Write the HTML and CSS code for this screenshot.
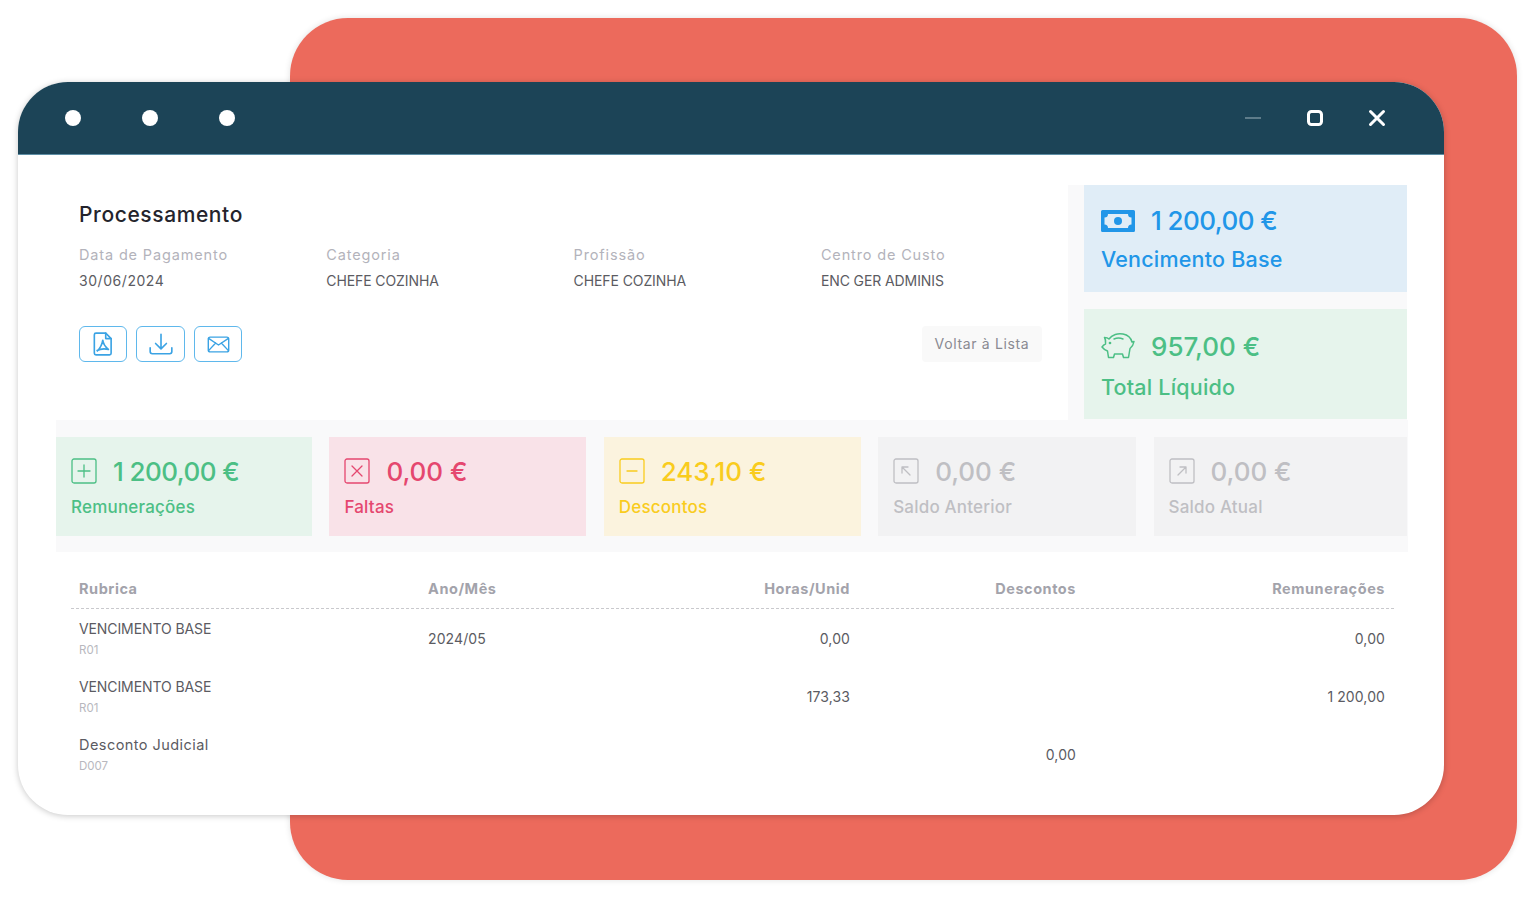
FILE: index.html
```html
<!DOCTYPE html>
<html lang="pt">
<head>
<meta charset="utf-8">
<title>Processamento</title>
<link rel="stylesheet" href="styles.css">
</head>
<body>
<div class="backdrop"></div>
<section class="window">
  <header class="titlebar">
    <div class="dots"><span class="dot"></span><span class="dot"></span><span class="dot"></span></div>
    <div class="controls">
      <svg class="ctl" viewBox="0 0 20 20"><path d="M2 10h16" stroke="#9fb4bd" stroke-width="1.2" fill="none"/></svg>
      <svg class="ctl" viewBox="0 0 20 20"><rect x="3.500" y="3.500" width="13" height="13" rx="3" stroke="#fff" stroke-width="3" fill="none"/></svg>
      <svg class="ctl" viewBox="0 0 20 20"><path d="M3.500 3.500l13 13M16.500 3.500l-13 13" stroke="#fff" stroke-width="3" stroke-linecap="round" fill="none"/></svg>
    </div>
  </header>
  <div class="content">
    <div class="top">
      <div class="main">
        <h1 class="title">Processamento</h1>
        <div class="fields">
          <div><div class="flabel">Data de Pagamento</div><div class="fvalue">30/06/2024</div></div>
          <div><div class="flabel">Categoria</div><div class="fvalue caps">CHEFE COZINHA</div></div>
          <div><div class="flabel">Profissão</div><div class="fvalue caps">CHEFE COZINHA</div></div>
          <div><div class="flabel">Centro de Custo</div><div class="fvalue caps">ENC GER ADMINIS</div></div>
        </div>
        <div class="actions">
          <div class="btns">
            <div class="btn"><svg viewBox="0 0 20 24" class="bicon bicon-pdf"><path d="M3.500 2h9l5 5v13.500a1.500 1.500 0 0 1-1.500 1.500H3.500A1.500 1.500 0 0 1 2 20.500v-17A1.500 1.500 0 0 1 3.500 2z"/><path d="M12.500 2v5h5"/><path d="M9.800 8.500c-.6 3.500-2 7-5 10M9.800 8.500c.4 3.500 2 6 5.200 8.500M4.500 18c3-1.500 6.500-2 10.500-1"/></svg></div>
            <div class="btn btn-wide"><svg viewBox="0 0 24 24" class="bicon bicon-down"><path d="M12 3v13M7 11.500l5 5 5-5"/><path d="M2 15.500v3.500a2 2 0 0 0 2 2h16a2 2 0 0 0 2-2v-3.500"/></svg></div>
            <div class="btn"><svg viewBox="0 0 24 18" class="bicon bicon-mail"><rect x="1.200" y="1.200" width="21.600" height="15.600" rx="2"/><path d="M1.500 2.500L12 9.500l10.500-7M1.500 15.500l7.500-8M22.500 15.500l-7.500-8"/></svg></div>
          </div>
          <div class="back">Voltar à Lista</div>
        </div>
      </div>
      <aside class="side">
        <div class="bigcard blue">
          <div class="amount"><svg class="ic-money" viewBox="0 0 34 22"><path fill="currentColor" fill-rule="evenodd" d="M1.500 0h31A1.500 1.500 0 0 1 34 1.500v19a1.500 1.500 0 0 1-1.500 1.500h-31A1.500 1.500 0 0 1 0 20.500v-19A1.500 1.500 0 0 1 1.500 0zM7 4a3.500 3.500 0 0 1-3.500 3.500v7A3.500 3.500 0 0 1 7 18h20a3.500 3.500 0 0 1 3.500-3.500v-7A3.500 3.500 0 0 1 27 4z"/><circle cx="17" cy="11" r="4" fill="currentColor"/></svg><span class="num tight">1 200,00 €</span></div>
          <div class="biglabel">Vencimento Base</div>
        </div>
        <div class="bigcard green tall">
          <div class="amount"><svg class="ic-pig" viewBox="0 0 34 28" fill="none" stroke="currentColor" stroke-width="1.500" stroke-linejoin="round" stroke-linecap="round"><path d="M8 7C11 2.500 17 1 22 2c5 1 8 4 9 8l2-.5c-.5 3-1.500 5-4 7l-1.500 9h-5l-1-3.500h-8l-1 3.500H7.500L6.500 19C4 18 2.500 17 1 15c1-1.500 2-2.500 3.500-3C4.500 10 5 8 3.500 5.500c2 0 3.500.5 4.500 1.500z"/><path d="M13 7c3-1.200 6-1.200 9 0"/><circle cx="9" cy="11" r=".6"/></svg><span class="num strong">957,00 €</span></div>
          <div class="biglabel">Total Líquido</div>
        </div>
      </aside>
    </div>
    <div class="strip">
      <div class="card c-green">
        <div class="amount small"><svg class="sq" viewBox="0 0 26 26"><rect x="1" y="1" width="24" height="24" rx="2"/><path d="M13 7v12M7 13h12"/></svg><span class="num tight">1 200,00 €</span></div>
        <div class="clabel">Remunerações</div>
      </div>
      <div class="card c-red">
        <div class="amount small"><svg class="sq" viewBox="0 0 26 26"><rect x="1" y="1" width="24" height="24" rx="2"/><path d="M8 8l10 10M18 8L8 18"/></svg><span class="num">0,00 €</span></div>
        <div class="clabel">Faltas</div>
      </div>
      <div class="card c-yellow">
        <div class="amount small"><svg class="sq" viewBox="0 0 26 26"><rect x="1" y="1" width="24" height="24" rx="2"/><path d="M8 13h10"/></svg><span class="num">243,10 €</span></div>
        <div class="clabel">Descontos</div>
      </div>
      <div class="card c-grey">
        <div class="amount small"><svg class="sq" viewBox="0 0 26 26"><rect x="1" y="1" width="24" height="24" rx="2"/><path d="M17 17L9 9M9 15V9h6"/></svg><span class="num">0,00 €</span></div>
        <div class="clabel">Saldo Anterior</div>
      </div>
      <div class="card c-grey">
        <div class="amount small"><svg class="sq" viewBox="0 0 26 26"><rect x="1" y="1" width="24" height="24" rx="2"/><path d="M9 17l8-8M11 9h6v6"/></svg><span class="num">0,00 €</span></div>
        <div class="clabel">Saldo Atual</div>
      </div>
    </div>
    <div class="table">
      <div class="row head">
        <div>Rubrica</div><div>Ano/Mês</div><div class="r">Horas/Unid</div><div class="r">Descontos</div><div class="r">Remunerações</div>
      </div>
      <div class="row">
        <div><div class="rname">VENCIMENTO BASE</div><div class="rcode">R01</div></div><div>2024/05</div><div class="r">0,00</div><div class="r"></div><div class="r">0,00</div>
      </div>
      <div class="row">
        <div><div class="rname">VENCIMENTO BASE</div><div class="rcode">R01</div></div><div></div><div class="r">173,33</div><div class="r"></div><div class="r">1 200,00</div>
      </div>
      <div class="row">
        <div><div class="rname mixed">Desconto Judicial</div><div class="rcode">D007</div></div><div></div><div class="r"></div><div class="r">0,00</div><div class="r"></div>
      </div>
    </div>
  </div>
</section>
</body>
</html>
```
FILE: styles.css
```css
* { box-sizing: border-box; }
html, body { margin: 0; padding: 0; }
body {
  width: 1536px;
  height: 898px;
  background: #fff;
  font-family: Inter, "Noto Sans", sans-serif;
  position: relative;
  overflow: hidden;
  padding: 82px 0 0 18px;
}
.backdrop {
  position: absolute;
  left: 290px;
  top: 18px;
  width: 1227px;
  height: 862px;
  background: #ec6a5c;
  border-radius: 58px;
  box-shadow: 0 0 6px rgba(0,0,0,.12);
}
.window {
  position: relative;
  width: 1426px;
  height: 733px;
  background: #fff;
  border-radius: 50px;
  box-shadow: 0 1px 6px rgba(0,0,0,.22);
  overflow: hidden;
}
.titlebar {
  height: 73px;
  background: #1c4457;
  border-bottom: 1px solid #5d8ea5;
  display: flex;
  align-items: center;
  justify-content: space-between;
  padding: 0 57px 0 47px;
}
.dots { display: flex; gap: 61px; }
.dot { width: 16px; height: 16px; border-radius: 50%; background: #fff; }
.controls { display: flex; gap: 42px; }
.ctl { width: 20px; height: 20px; display: block; }

.content { padding: 30px 37px 0 38px; }
.top { display: flex; height: 235px; }
.main { flex: 1; min-width: 0; padding: 17px 26px 0 23px; }
.title {
  margin: 0;
  font-size: 21px;
  line-height: 26px;
  font-weight: 500;
  color: #24242c;
  letter-spacing: .6px;
}
.fields {
  display: grid;
  grid-template-columns: repeat(4, 247.300px);
  margin-top: 17px;
}
.flabel { font-size: 14.500px; line-height: 20px; color: #b3b3bb; letter-spacing: .85px; }
.fvalue { font-size: 14px; line-height: 20px; margin-top: 6px; color: #5b5b62; letter-spacing: .55px; }
.fvalue.caps { letter-spacing: -.1px; }
.actions { display: flex; justify-content: space-between; margin-top: 35px; }
.btns { display: flex; gap: 9px; }
.btn {
  width: 48px;
  height: 36px;
  border: 1px solid #5fb8ec;
  border-radius: 6px;
  display: flex;
  align-items: center;
  justify-content: center;
  background: #fff;
}
.btn-wide { width: 49px; }
.bicon { fill: none; stroke: #3ba3e4; stroke-width: 1.500; stroke-linejoin: round; stroke-linecap: round; }
.bicon-pdf { width: 22px; height: 26px; }
.bicon-down { width: 26px; height: 26px; }
.bicon-mail { width: 23px; height: 17px; }
.back {
  width: 120px;
  height: 36px;
  padding-bottom: 2px;
  background: #f9f9f9;
  border-radius: 4px;
  color: #8a8a92;
  font-size: 14px;
  letter-spacing: .65px;
  display: flex;
  align-items: center;
  justify-content: center;
}
.side {
  flex: none;
  width: 339px;
  background: #f9f9fa;
  padding-left: 16px;
  display: flex;
  flex-direction: column;
  gap: 17px;
}
.bigcard { height: 107px; padding: 21px 17px 0; }
.bigcard.tall { height: 110px; padding-top: 23px; }
.blue { background: #e0edf7; color: #2196e8; }
.green { background: #e6f4ec; color: #4cbf85; }
.amount { display: flex; align-items: center; height: 28px; font-size: 26px; font-weight: 500; letter-spacing: -.05px; }
.num.tight { letter-spacing: -.55px; }
.num.strong { letter-spacing: 0; }
.ic-money { width: 34px; height: 22px; margin: 2px 16px 0 0; flex: none; }
.ic-pig { width: 34px; height: 28px; margin-right: 16px; flex: none; }
.biglabel { font-size: 21.500px; line-height: 28px; margin-top: 11px; font-weight: 500; letter-spacing: .2px; }
.tall .biglabel { margin-top: 13px; }

.strip {
  margin-right: -1px;
  background: #f9f9fa;
  padding: 17px 1px 16px 0;
  display: grid;
  grid-template-columns: 256px 257px 257px 258px 253px;
  gap: 17.400px;
}
.card { height: 99px; padding: 21px 15px 0; }
.amount.small { height: 26px; }
.sq { width: 26px; height: 26px; margin-right: 16px; flex: none; fill: none; stroke: currentColor; stroke-width: 1.300; stroke-linecap: round; stroke-linejoin: round; }
.clabel { font-size: 17px; line-height: 22px; margin-top: 12px; font-weight: 500; letter-spacing: .2px; }
.c-green { background: #e6f4ec; color: #4cbf85; }
.c-red { background: #f9e2e8; color: #e5476f; }
.c-yellow { background: #fbf3de; color: #f9cc1e; }
.c-grey { background: #f2f2f3; color: #bfbfc3; }

.table { margin: 0 13px 0 15px; padding-top: 26px; }
.row {
  display: grid;
  grid-template-columns: 349px 150px 272px 226px 309px;
  padding: 0 8px;
  height: 58px;
  align-items: center;
  color: #5b5b62;
  font-size: 14px;
  letter-spacing: .1px;
}
.row.head {
  height: 31px;
  padding-bottom: 10px;
  border-bottom: 1px dashed #c9c9cd;
  color: #a3a3ab;
  font-weight: 700;
  font-size: 14.500px;
  letter-spacing: .55px;
}
.r { text-align: right; }
.rname { font-size: 14px; line-height: 18px; letter-spacing: -.1px; }
.rname.mixed { font-size: 14.500px; letter-spacing: .45px; }
.rcode { font-size: 11.500px; line-height: 14px; margin-top: 5px; color: #b8b8be; letter-spacing: 0; }
```
